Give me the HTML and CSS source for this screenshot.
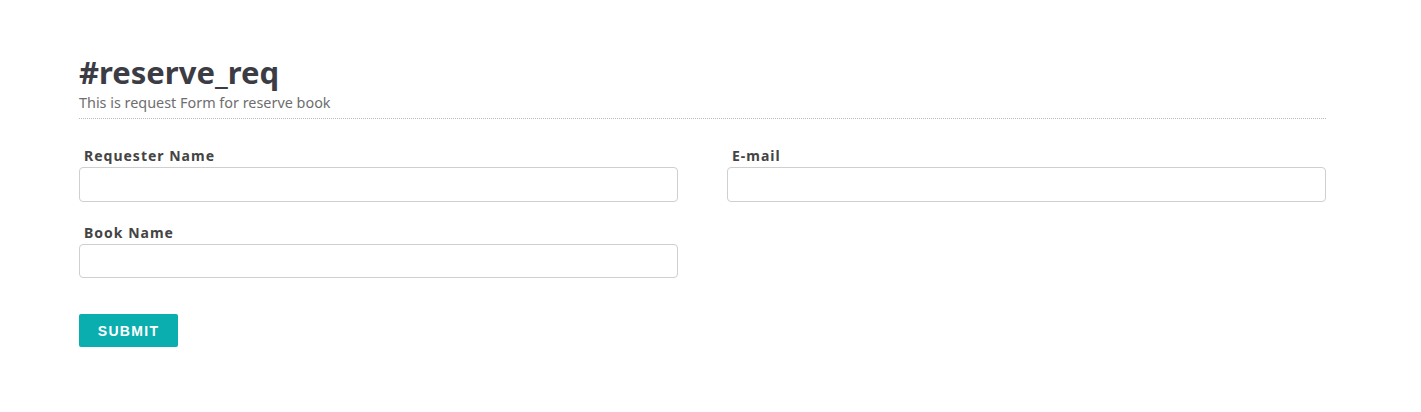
FILE: index.html
```html
<!DOCTYPE html>
<html>
<head>
<meta charset="utf-8">
<link rel="stylesheet" href="styles.css">
</head>
<body>
<div class="page">
  <header class="head">
    <h1 class="title">#reserve_req</h1>
    <p class="sub">This is request Form for reserve book</p>
  </header>
  <form class="form">
    <div class="grid">
      <div class="field">
        <label class="label">Requester Name</label>
        <input class="input" type="text">
      </div>
      <div class="field">
        <label class="label">E-mail</label>
        <input class="input" type="text">
      </div>
      <div class="field">
        <label class="label">Book Name</label>
        <input class="input book" type="text">
      </div>
    </div>
    <button class="submit" type="button">SUBMIT</button>
  </form>
</div>
</body>
</html>
```
FILE: styles.css
```css
html, body { margin: 0; padding: 0; background: #fff; }
body { font-family: "Noto Sans", "Open Sans", sans-serif; }
.page { padding: 53px 95px 0 79px; }
.head { border-bottom: 1px dotted #bcbcbc; padding-bottom: 7px; }
.title { margin: 0; font-size: 31px; font-weight: 700; color: #3c3c44; line-height: 39px; }
.sub { margin: 2px 0 0; font-size: 14.4px; color: #6e6e6e; line-height: 17px; }
.form { padding-top: 28px; }
.grid { display: grid; grid-template-columns: 599px 599px; column-gap: 49px; row-gap: 22px; }
.field { display: flex; flex-direction: column; }
.label { font-size: 14px; font-weight: 700; color: #444; letter-spacing: 1px; padding-left: 5px; line-height: 18px; margin-bottom: 2px; }
.input { height: 35px; box-sizing: border-box; border: 1px solid #cfcfcf; border-radius: 4px; background: #fff; margin: 0; }
.input.book { height: 34px; }
.submit { margin-top: 36px; width: 99px; height: 33px; border: 0; border-radius: 2px; background: #0aaeae; color: #fff; font-family: "Liberation Sans", Arial, sans-serif; font-weight: 700; font-size: 14px; letter-spacing: 1.3px; padding: 0; }
```
